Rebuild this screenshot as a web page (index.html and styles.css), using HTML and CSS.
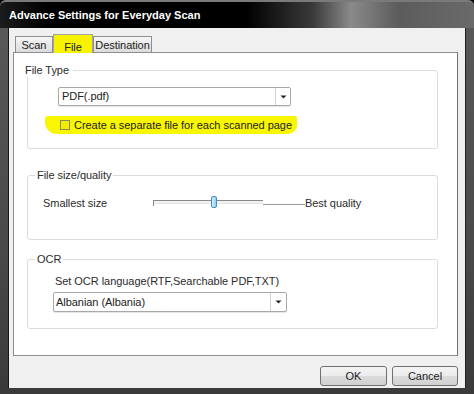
FILE: index.html
```html
<!DOCTYPE html>
<html>
<head>
<meta charset="utf-8">
<link rel="stylesheet" href="styles.css">
</head>
<body>
<div class="window">
  <div class="titlebar">Advance Settings for Everyday Scan</div>
  <div class="client">
    <div class="tabs">
      <div class="tab">Scan</div>
      <div class="tab selected">File</div>
      <div class="tab">Destination</div>
    </div>
    <div class="panel">
      <fieldset class="group g-type">
        <legend class="legend-first">File Type</legend>
        <div class="select sel-type">
          <span class="sel-text">PDF(.pdf)</span>
          <span class="sel-arrow"><svg width="7" height="4" viewBox="0 0 7 4"><path d="M0.5 0.5h6L3.5 3.5z" fill="#222"/></svg></span>
        </div>
        <div class="check-row">
          <span class="checkbox"></span>
          <span>Create a separate file for each scanned page</span>
        </div>
      </fieldset>
      <fieldset class="group g-size">
        <legend>File size/quality</legend>
        <div class="slider-row">
          <span class="lbl-small">Smallest size</span>
          <div class="slider">
            <span class="tick"></span>
            <span class="thumb"></span>
          </div>
          <span class="tail"></span>
          <span>Best quality</span>
        </div>
      </fieldset>
      <fieldset class="group g-ocr">
        <legend>OCR</legend>
        <div class="ocr-label">Set OCR language(RTF,Searchable PDF,TXT)</div>
        <div class="select sel-ocr">
          <span class="sel-text">Albanian (Albania)</span>
          <span class="sel-arrow"><svg width="7" height="4" viewBox="0 0 7 4"><path d="M0.5 0.5h6L3.5 3.5z" fill="#222"/></svg></span>
        </div>
      </fieldset>
    </div>
    <div class="footer">
      <button class="btn">OK</button>
      <button class="btn">Cancel</button>
    </div>
  </div>
</div>
</body>
</html>
```
FILE: styles.css
```css
html, body {
  margin: 0;
  padding: 0;
  background: #000;
}
body {
  font-family: "Liberation Sans", Arial, sans-serif;
  font-size: 11px;
  letter-spacing: -0.05px;
  color: #2b2b2b;
}
.window {
  width: 474px;
  height: 394px;
  box-sizing: border-box;
  padding: 0 8px 6px 8px;
  background: linear-gradient(to bottom, #5a5a5a 0%, #4a4a4a 60%, #3a3a3a 100%);
  border-top-left-radius: 6px;
  border-top-right-radius: 6px;
  display: flex;
  flex-direction: column;
}
.titlebar {
  height: 28px;
  flex: none;
  box-sizing: border-box;
  margin: 0 -8px;
  padding: 6px 0 0 9px;
  border-top: 2px solid #7a7a7a;
  border-top-left-radius: 6px;
  border-top-right-radius: 6px;
  background: linear-gradient(to right, #1c1c1c 0%, #000 10%, #000 52%, #3a3a3a 66%, #8a8a8a 74%, #5c5c5c 84%, #6a6a6a 100%);
  color: #fff;
  font-weight: bold;
  font-size: 11px;
  letter-spacing: 0;
  line-height: 14px;
  text-shadow: 0 0 2px #000;
}
.client {
  flex: 1;
  min-height: 0;
  background: #f0f0f0;
  border-left: 1px solid #151515;
  border-right: 1px solid #202020;
  padding: 6px 7px 0 4px;
  display: flex;
  flex-direction: column;
}
.tabs {
  display: flex;
  flex: none;
  height: 18px;
  padding-left: 2px;
  align-items: flex-end;
}
.tab {
  height: 16px;
  box-sizing: border-box;
  border: 1px solid #8c8e94;
  border-bottom: none;
  background: linear-gradient(to bottom, #f6f6f6, #dcdcdc);
  padding: 1px 0 0 0;
  text-align: center;
  line-height: 14px;
  color: #222;
}
.tab:first-child {
  width: 38px;
}
.tab:last-child {
  width: 59px;
}
.tab.selected {
  height: 19px;
  width: 40px;
  margin-bottom: -1px;
  position: relative;
  z-index: 1;
  background: #f6f200;
  padding: 5px 0 0 0;
  border-color: #a0a2a8;
}
.panel {
  flex: none;
  height: 304px;
  box-sizing: border-box;
  background: #fff;
  border: 1px solid #8c8e94;
  border-right-color: #6e6e6e;
  padding-top: 10px;
}
.group {
  width: 411px;
  box-sizing: border-box;
  margin: 0 0 0 13px;
  padding: 0;
  border: 1px solid #dcdcdc;
  border-radius: 3px;
  min-width: 0;
}
legend {
  padding: 0 2px;
  margin-left: 7px;
  line-height: 14px;
  color: #2b2b2b;
}
legend.legend-first {
  margin-left: -3px;
  padding: 0 4px 0 0;
}
.g-type {
  padding: 10px 0 14px 0;
}
.select {
  height: 19px;
  box-sizing: border-box;
  border: 1px solid #a8a8a8;
  border-radius: 2px;
  background: #fff;
  display: flex;
  align-items: stretch;
  box-shadow: 0 1px 0 #e6e6e6;
}
.sel-text {
  flex: 1;
  line-height: 17px;
  padding-left: 3px;
  color: #222;
}
.sel-arrow {
  width: 14px;
  border-left: 1px solid #d0d0d0;
  display: flex;
  align-items: center;
  justify-content: center;
}
.sel-type {
  width: 233px;
  margin-left: 30px;
}
.check-row {
  margin: 10px 0 0 17px;
  width: 252px;
  height: 18px;
  box-sizing: border-box;
  padding-left: 15px;
  background: #f8f600;
  border-radius: 3px 2px 9px 12px;
  display: flex;
  align-items: center;
  gap: 4px;
  color: #222;
}
.checkbox {
  flex: none;
  border: 1px solid #8a8a6a;
  background: #f2ee00;
  box-sizing: border-box;
  width: 10px;
  height: 10px;
}
.g-size {
  margin-top: 19px;
  padding: 14px 0 29px 0;
}
.slider-row {
  display: flex;
  align-items: center;
  height: 14px;
  padding-left: 15px;
}
.lbl-small {
  width: 110px;
}
.slider {
  position: relative;
  width: 110px;
  height: 4px;
  border-top: 1px solid #8a8a8a;
  border-left: 1px solid #8a8a8a;
  border-bottom: 1px solid #e6e6e6;
  background: #f2f2f2;
  box-sizing: border-box;
  margin-top: -2px;
}
.tick {
  position: absolute;
  left: -1px;
  top: 2px;
  width: 1px;
  height: 3px;
  background: #888;
}
.thumb {
  position: absolute;
  left: 57px;
  top: -5px;
  width: 6px;
  height: 12px;
  box-sizing: border-box;
  border: 1px solid #4a8cb8;
  border-radius: 2px;
  background: linear-gradient(to right, #cfeeff, #8fd0f2);
}
.tail {
  width: 42px;
  height: 1px;
  background: #9a9a9a;
  margin-top: 2px;
}
.g-ocr {
  margin-top: 12px;
  padding: 8px 0 16px 0;
}
.ocr-label {
  margin-left: 27px;
  line-height: 14px;
}
.sel-ocr {
  width: 234px;
  height: 20px;
  margin: 4px 0 0 25px;
}
.sel-ocr .sel-text {
  line-height: 18px;
  padding-left: 2px;
}
.sel-ocr .sel-arrow {
  width: 15px;
}
.footer {
  display: flex;
  justify-content: flex-end;
  gap: 5px;
  padding-top: 10px;
}
.btn {
  width: 67px;
  height: 20px;
  font-family: "Liberation Sans", Arial, sans-serif;
  font-size: 11px;
  color: #222;
  border: 1px solid #707070;
  border-radius: 3px;
  background: linear-gradient(to bottom, #f4f4f4 0%, #ebebeb 50%, #dcdcdc 51%, #d0d0d0 100%);
  padding: 0;
}
.btn + .btn {
  width: 66px;
}
```
